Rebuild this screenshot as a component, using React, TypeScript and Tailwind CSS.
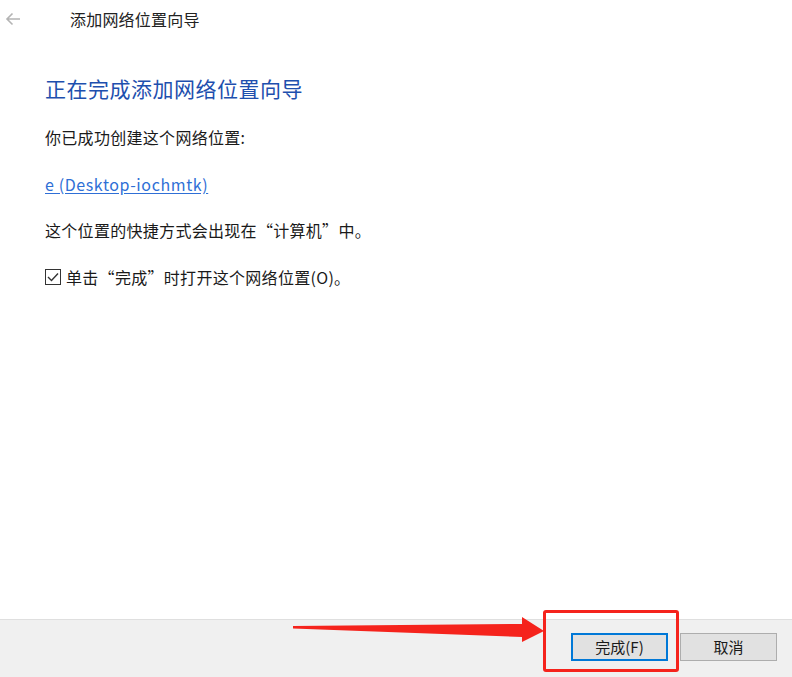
import React from 'react'

const font = { fontFamily: '"Noto Sans CJK SC", "Noto Sans", sans-serif' }

const WinButton = ({ children, primary }: { children: React.ReactNode; primary?: boolean }) => (
  <button
    className={
      primary
        ? 'flex h-[28px] w-[97px] items-center justify-center border-2 border-[#0078d7] bg-[#e1e1e1] text-[15px] text-[#1a1a1a]'
        : 'flex h-[28px] w-[97px] items-center justify-center border border-[#adadad] bg-[#e1e1e1] text-[15px] text-[#1a1a1a]'
    }
  >
    {children}
  </button>
)

export default function App() {
  return (
    <div className="relative flex h-[677px] w-[792px] flex-col overflow-hidden bg-white" style={font}>
      {/* title row */}
      <div className="flex h-[37px] items-center">
        <svg className="ml-[5px]" width="16" height="14" viewBox="0 0 16 14">
          <path d="M15 7H2M7.5 1.5 2 7l5.5 5.5" fill="none" stroke="#b4b4b4" strokeWidth="1.6" />
        </svg>
        <span className="ml-[49px] text-[16px] leading-[22px] tracking-[0.2px] text-[#222]">添加网络位置向导</span>
      </div>

      <div className="flex flex-col pl-[45px]">
        <h1 className="mt-[37px] h-[28px] text-[21px] leading-[28px] tracking-[0.5px] text-[#1e4fae]">正在完成添加网络位置向导</h1>
        <p className="mt-[24px] h-[22px] text-[16px] leading-[22px] tracking-[0.3px] text-[#1a1a1a]">你已成功创建这个网络位置:</p>
        <a className="mt-[25px] h-[22px] w-fit text-[16px] leading-[22px] tracking-[0.6px] text-[#2f6fd6] underline underline-offset-2">
          e (Desktop-iochmtk)
        </a>
        <p className="mt-[24px] h-[22px] text-[16px] leading-[22px] tracking-[0.3px] text-[#1a1a1a]">
          这个位置的快捷方式会出现在“计算机”中。
        </p>
        <label className="mt-[25px] flex h-[22px] items-center gap-[5px] text-[16px] leading-[22px] tracking-[0.3px] text-[#1a1a1a]">
          <span className="flex h-[16px] w-[16px] items-center justify-center border border-[#333]">
            <svg width="12" height="10" viewBox="0 0 12 10">
              <path d="M1 5l3.5 3.5L11 1.5" fill="none" stroke="#333" strokeWidth="1.4" />
            </svg>
          </span>
          单击“完成”时打开这个网络位置(O)。
        </label>
      </div>

      <div className="flex-1" />

      <div className="flex h-[58px] justify-end gap-[12px] border-t border-[#dfdfdf] bg-[#f0f0f0] pr-[15px] pt-[13px]">
        <WinButton primary>完成(F)</WinButton>
        <WinButton>取消</WinButton>
      </div>

      {/* annotation */}
      <div className="absolute left-[543px] top-[610px] h-[62px] w-[136px] rounded-[3px] border-[3px] border-[#f5231c]" />
      <svg className="absolute left-0 top-0" width="792" height="677" viewBox="0 0 792 677">
        <polygon points="293,626 522,624 522,617 544,631 522,642 522,637 293,628.5" fill="#f5231c" />
      </svg>
    </div>
  )
}
